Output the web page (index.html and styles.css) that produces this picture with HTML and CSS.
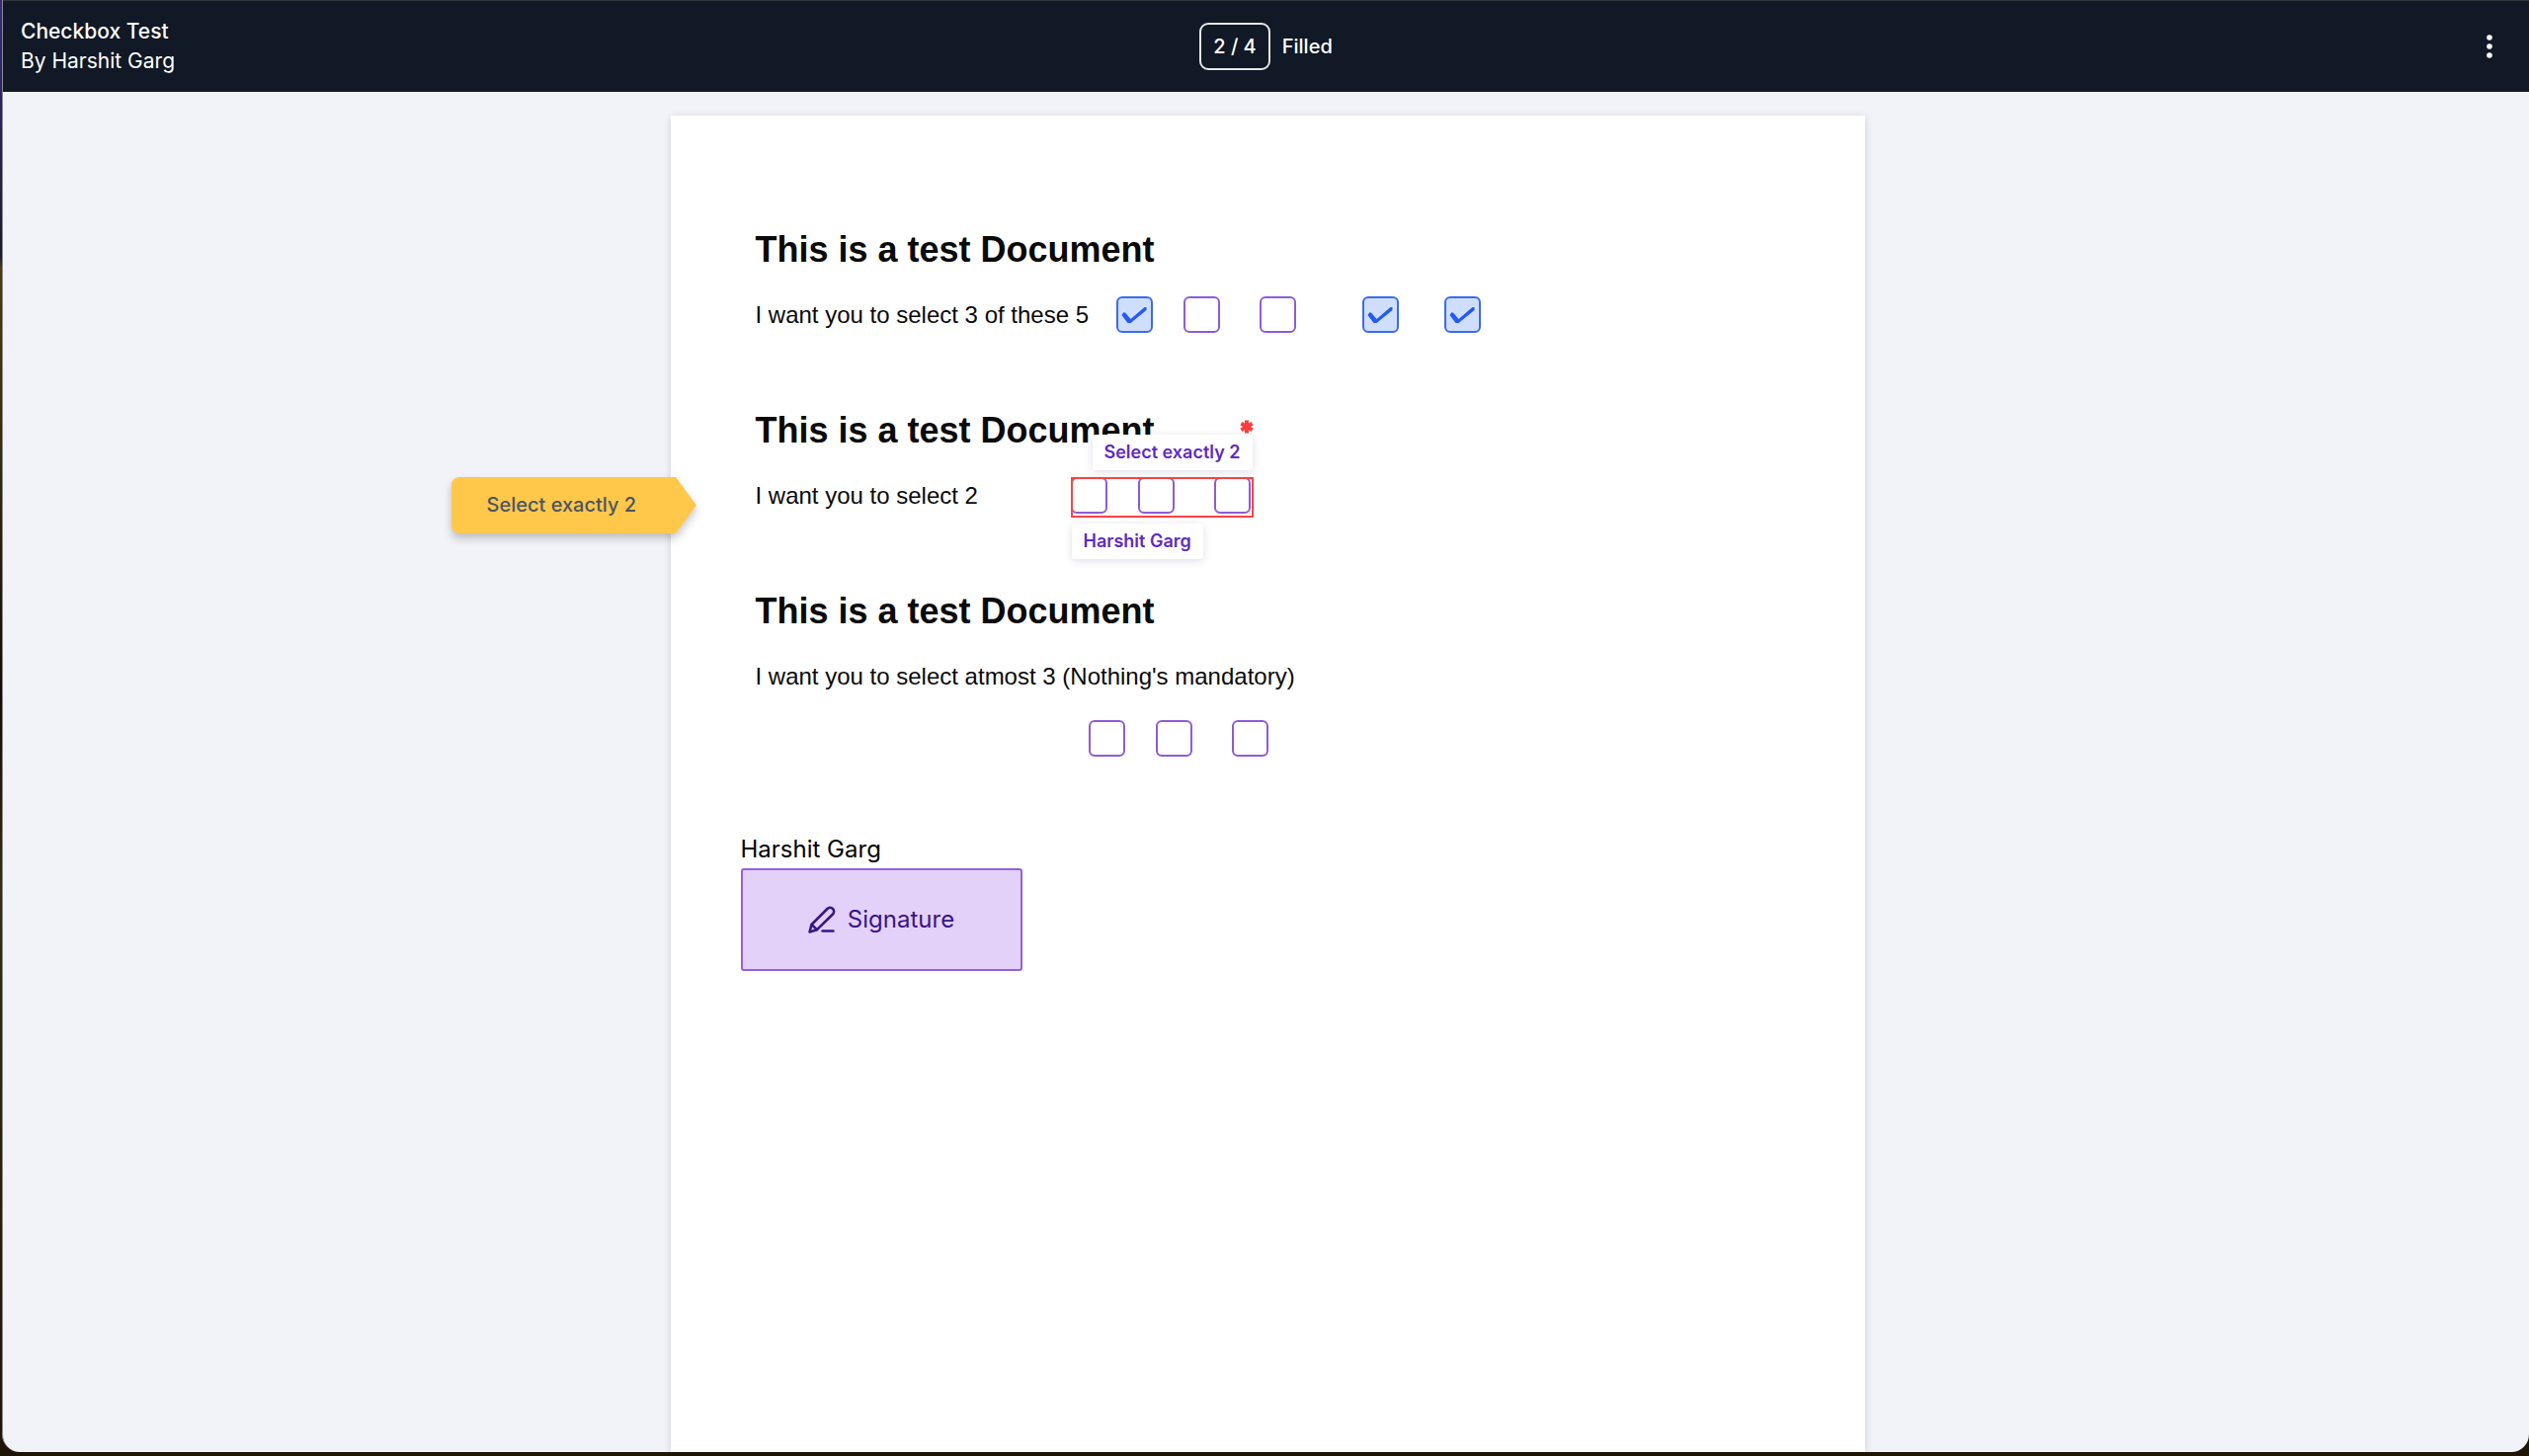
FILE: index.html
```
<!DOCTYPE html>
<html lang="en">
  <head>
    <meta charset="utf-8" />
    <meta name="viewport" content="width=device-width, initial-scale=1.0" />
    <title>Checkbox Test</title>
    <link rel="stylesheet" href="styles.css">
  </head>
  <body>
    <div class="window">
      <header>
        <div class="title">
          <h1>Checkbox Test</h1>
          <p>By Harshit Garg</p>
        </div>
        <div class="progress">
          <span class="count">2 / 4</span>
          <span>Filled</span>
        </div>
        <button type="button" class="menu" aria-label="Menu">
          <svg width="6" height="24" viewBox="0 0 6 24" fill="#ffffff">
            <circle cx="3" cy="3" r="2.800" />
            <circle cx="3" cy="12" r="2.800" />
            <circle cx="3" cy="21" r="2.800" />
          </svg>
        </button>
      </header>

      <main>
        <form class="page">
          <section>
            <h2>This is a test Document</h2>
            <div class="row five">
              <p>I want you to select 3 of these 5</p>
              <input type="checkbox" aria-label="Option 1" checked>
              <input type="checkbox" aria-label="Option 2">
              <input type="checkbox" aria-label="Option 3">
              <input type="checkbox" aria-label="Option 4" checked>
              <input type="checkbox" aria-label="Option 5" checked>
            </div>
          </section>

          <section>
            <h2>This is a test Document</h2>
            <div class="row two">
              <p>I want you to select 2</p>
              <div class="group active">
                <input type="checkbox" aria-label="Option 1">
                <input type="checkbox" aria-label="Option 2">
                <input type="checkbox" aria-label="Option 3">
                <span class="tag rule">Select exactly 2</span>
                <span class="tag signer">Harshit Garg</span>
                <svg class="required" width="14" height="14" viewBox="0 0 14 14" stroke="#f93e3e" stroke-width="4">
                  <path d="M7 0.5v13M1.4 3.8l11.2 6.4M12.6 3.8L1.4 10.2" />
                </svg>
              </div>
              <div class="hint">
                <svg width="248" height="57" viewBox="0 0 248 57" fill="#ffc84a">
                  <path d="M8 0H227L248 28.500L227 57H8a8 8 0 0 1-8-8V8a8 8 0 0 1 8-8z" />
                </svg>
                <span>Select exactly 2</span>
              </div>
            </div>
          </section>

          <section>
            <h2>This is a test Document</h2>
            <div class="row">
              <p>I want you to select atmost 3 (Nothing's mandatory)</p>
            </div>
            <div class="group optional">
              <input type="checkbox" aria-label="Option 1">
              <input type="checkbox" aria-label="Option 2">
              <input type="checkbox" aria-label="Option 3">
            </div>
          </section>

          <div class="sign">
            <label for="signature">Harshit Garg</label>
            <button type="button" id="signature">
              <svg width="28" height="28" viewBox="0 0 28 28" fill="none" stroke="#37148a" stroke-width="2.500" stroke-linecap="round" stroke-linejoin="round">
                <path d="M1.500 26.500l2-7.500L19.500 3a3.700 3.700 0 0 1 5.500 5.500L9 24.200z" />
                <path d="M3.500 19l5.500 5.200M14.500 25.500h11" />
              </svg>
              Signature
            </button>
          </div>
        </form>
      </main>
    </div>
  </body>
</html>
```
FILE: styles.css
```
* {
  box-sizing: border-box;
}
body {
  min-height: 100vh;
  margin: 0;
  font-family: Inter, "Liberation Sans", sans-serif;
  background: linear-gradient(#3a2a80 0, #1c1a2c 260px, #4a3b12 270px, #3a2c0c 450px, #120d04 700px, #3a2c0c 900px, #1f1504 100%);
}
h1, h2, p {
  margin: 0;
}

.window {
  display: flex;
  flex-direction: column;
  height: calc(100vh - 4px);
  margin-left: 2px;
  overflow: hidden;
  border-left: 1px solid #8a8a90;
  border-radius: 0 0 18px 18px;
  background: #f2f3f8;
}

header {
  display: grid;
  grid-template-columns: 1fr auto 1fr;
  align-items: center;
  flex: none;
  height: 93px;
  padding: 0 18px;
  border-top: 1px solid #33363d;
  color: #ffffff;
  background: #111826;
  font-size: 21px;
  line-height: 30px;
}
header h1 {
  font-size: 21px;
  font-weight: 500;
}
.progress {
  display: flex;
  align-items: center;
  gap: 12px;
  font-size: 20px;
  font-weight: 500;
}
.count {
  padding: 7px 12px;
  border: 2px solid #e6e6e6;
  border-radius: 9px;
}
.menu {
  display: flex;
  justify-self: end;
  margin-right: 15px;
  padding: 4px;
  border: 0;
  background: none;
}

main {
  display: flex;
  flex: 1;
  justify-content: center;
  min-height: 0;
  padding: 24px 0 0 3px;
}
.page {
  width: 90%;
  max-width: 1209px;
  padding: 114px 71px 0;
  background: #ffffff;
  box-shadow: 0 2px 8px rgba(0, 0, 0, 0.15);
}

section {
  margin-bottom: 77px;
  padding-left: 15px;
  color: #0a0a0a;
  font-family: "Liberation Sans", Arial, sans-serif;
}
h2 {
  margin-bottom: 25px;
  font-size: 36px;
  line-height: 44px;
}
.row {
  position: relative;
  display: grid;
  height: 37px;
  font-size: 24px;
  line-height: 37px;
}
.five {
  grid-template-columns: 365px 68px 77px 104px 83px 37px;
}
.two {
  grid-template-columns: 319px 185px;
}
.group {
  display: grid;
  grid-template-columns: 68px 77px 37px;
}
.optional {
  margin-top: 26px;
  padding-left: 337px;
}
.active {
  position: relative;
  height: 41px;
  outline: 2px solid #fb4444;
  outline-offset: -2px;
}

input[type=checkbox] {
  appearance: none;
  width: 37px;
  height: 37px;
  margin: 0;
  border: 2px solid #8f5bd8;
  border-radius: 6px;
  background: #ffffff;
}
input[type=checkbox]:checked {
  border-color: #3b6bf0;
  background: #d0defe;
}
input[type=checkbox]:checked::before {
  content: '';
  display: block;
  width: 33px;
  height: 33px;
  background: #2459f3;
  clip-path: polygon(4px 17px, 6px 14px, 8px 15px, 13px 21px, 27px 9px, 29px 9px, 29px 12px, 13px 25px, 10px 25px);
}

.tag {
  position: absolute;
  padding: 0 12px;
  border-radius: 3px;
  color: #5f2bbf;
  background: #ffffff;
  box-shadow: 0 2px 8px rgba(30, 30, 80, 0.14);
  font-family: Inter, sans-serif;
  font-size: 18px;
  font-weight: 600;
  line-height: 36px;
  white-space: nowrap;
}
.rule {
  right: 1px;
  bottom: 48px;
}
.signer {
  top: 47px;
  left: 1px;
}
.required {
  position: absolute;
  top: -58px;
  right: 0;
}

.hint {
  position: absolute;
  left: -308px;
  width: 248px;
  height: 57px;
  color: #4b5563;
  font-family: Inter, sans-serif;
  font-size: 20px;
  font-weight: 500;
  line-height: 57px;
}
.hint svg {
  position: absolute;
  filter: drop-shadow(0 5px 4px rgba(0, 0, 0, 0.22));
}
.hint span {
  position: relative;
  padding-left: 36px;
}

.sign {
  display: flex;
  flex-direction: column;
  align-items: flex-start;
  gap: 2px;
  font-size: 24px;
  line-height: 34px;
}
.sign button {
  display: flex;
  align-items: center;
  justify-content: center;
  gap: 12px;
  width: 285px;
  height: 104px;
  border: 2px solid #9461de;
  border-radius: 3px;
  color: #37148a;
  background: #e3d1f9;
  font: inherit;
}
```
